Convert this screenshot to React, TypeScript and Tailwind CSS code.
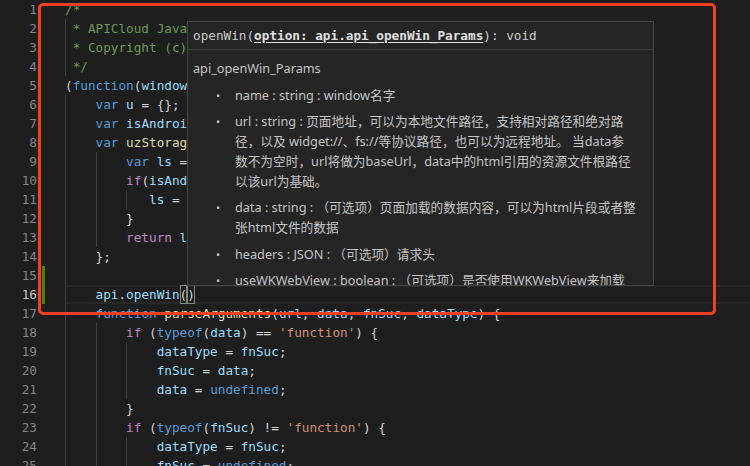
import React from 'react';

type Tok = [string, keyof typeof COLOR];

const COLOR = {
  k: 'text-[#569cd6]',
  c: 'text-[#c586c0]',
  i: 'text-[#9cdcfe]',
  f: 'text-[#dcdcaa]',
  s: 'text-[#ce9178]',
  p: 'text-[#d4d4d4]',
  m: 'text-[#6a9955]',
  r: 'text-[#d16969]',
};

const INDENT: Record<number, string> = {
  1: 'w-[1ch]',
  3: 'w-[3ch]',
  4: 'w-[4ch]',
};

interface Line {
  indent: number[];
  toks: Tok[];
}

const LINES: Line[] = [
  { indent: [], toks: [['/*', 'm']] },
  { indent: [1], toks: [['* APICloud JavaScript Library', 'm']] },
  { indent: [1], toks: [['* Copyright (c) 2014 apicloud.com', 'm']] },
  { indent: [1], toks: [['*/', 'm']] },
  { indent: [], toks: [['(', 'p'], ['function', 'k'], ['(', 'p'], ['window', 'i'], ['){', 'p']] },
  { indent: [4], toks: [['var', 'k'], [' ', 'p'], ['u', 'i'], [' = {};', 'p']] },
  { indent: [4], toks: [['var', 'k'], [' ', 'p'], ['isAndroid', 'i'], [' = (', 'p'], ['/android/gi', 'r'], [').', 'p'], ['test', 'f'], ['(', 'p'], ['navigator', 'i'], ['.', 'p'], ['appVersion', 'i'], [');', 'p']] },
  { indent: [4], toks: [['var', 'k'], [' ', 'p'], ['uzStorage', 'f'], [' = ', 'p'], ['function', 'k'], ['(){', 'p']] },
  { indent: [4, 4], toks: [['var', 'k'], [' ', 'p'], ['ls', 'i'], [' = ', 'p'], ['window', 'i'], ['.', 'p'], ['localStorage', 'i'], [';', 'p']] },
  { indent: [4, 4], toks: [['if', 'c'], ['(', 'p'], ['isAndroid', 'i'], ['){', 'p']] },
  { indent: [4, 4, 3], toks: [['ls', 'i'], [' = ', 'p'], ['os', 'i'], ['.', 'p'], ['localStorage', 'f'], ['();', 'p']] },
  { indent: [4, 4], toks: [['}', 'p']] },
  { indent: [4, 4], toks: [['return', 'c'], [' ', 'p'], ['ls', 'i'], [';', 'p']] },
  { indent: [4], toks: [['};', 'p']] },
  { indent: [4], toks: [] },
  { indent: [4], toks: [['api', 'i'], ['.', 'p'], ['openWin', 'i']] },
  { indent: [4], toks: [['function', 'k'], [' ', 'p'], ['parseArguments', 'f'], ['(', 'p'], ['url', 'i'], [', ', 'p'], ['data', 'i'], [', ', 'p'], ['fnSuc', 'i'], [', ', 'p'], ['dataType', 'i'], [') {', 'p']] },
  { indent: [4, 4], toks: [['if', 'c'], [' (', 'p'], ['typeof', 'k'], ['(', 'p'], ['data', 'i'], [') == ', 'p'], ["'function'", 's'], [') {', 'p']] },
  { indent: [4, 4, 4], toks: [['dataType', 'i'], [' = ', 'p'], ['fnSuc', 'i'], [';', 'p']] },
  { indent: [4, 4, 4], toks: [['fnSuc', 'i'], [' = ', 'p'], ['data', 'i'], [';', 'p']] },
  { indent: [4, 4, 4], toks: [['data', 'i'], [' = ', 'p'], ['undefined', 'k'], [';', 'p']] },
  { indent: [4, 4], toks: [['}', 'p']] },
  { indent: [4, 4], toks: [['if', 'c'], [' (', 'p'], ['typeof', 'k'], ['(', 'p'], ['fnSuc', 'i'], [') != ', 'p'], ["'function'", 's'], [') {', 'p']] },
  { indent: [4, 4, 4], toks: [['dataType', 'i'], [' = ', 'p'], ['fnSuc', 'i'], [';', 'p']] },
  { indent: [4, 4, 4], toks: [['fnSuc', 'i'], [' = ', 'p'], ['undefined', 'k'], [';', 'p']] },
];

const ACTIVE = 16;
const MODIFIED = [15, 16];

function CodeLine({ line, n }: { line: Line; n: number }) {
  const active = n === ACTIVE;
  return (
    <div className="flex h-[19px] leading-[19px]">
      <div className="flex w-[65px] shrink-0">
        <span className={`w-[37px] text-right ${active ? 'text-[#c6c6c6]' : 'text-[#858585]'}`}>{n}</span>
        <span className={`ml-[5px] w-[3px] ${MODIFIED.includes(n) ? 'bg-[#587c0c]' : ''}`} />
      </div>
      <div
        className={`flex flex-1 whitespace-pre ${
          active ? 'shadow-[inset_0_2px_0_#282828,inset_0_-2px_0_#282828]' : ''
        }`}
      >
        {line.indent.map((w, i) => (
          <span key={i} className={`${INDENT[w]} h-full shrink-0 border-l border-[#404040]`} />
        ))}
        {line.toks.map(([t, c], i) => (
          <span key={i} className={COLOR[c]}>{t}</span>
        ))}
        {active && (
          <>
            <span className="text-[#d4d4d4] shadow-[inset_0_0_0_1px_#7f8a7f]">(</span>
            <span className="text-[#d4d4d4] shadow-[inset_0_0_0_1px_#7f8a7f]">)</span>
          </>
        )}
      </div>
    </div>
  );
}

const ITEMS: string[][] = [
  ['name : string : window名字'],
  [
    'url : string : 页面地址，可以为本地文件路径，支持相对路径和绝对路',
    '径，以及 widget://、fs://等协议路径，也可以为远程地址。 当data参',
    '数不为空时，url将做为baseUrl，data中的html引用的资源文件根路径',
    '以该url为基础。',
  ],
  ['data : string : （可选项）页面加载的数据内容，可以为html片段或者整', '张html文件的数据'],
  ['headers : JSON : （可选项）请求头'],
  ['useWKWebView : boolean : （可选项）是否使用WKWebView来加载'],
];

function HoverWidget() {
  return (
    <div className="absolute left-[187px] top-[21px] h-[265px] w-[467px] overflow-hidden border border-[#454545] bg-[#252526]">
      <div className="h-[28px] border-b border-[#3a3a3a] px-[5px] leading-[27px] text-[#cccccc] whitespace-pre">
        openWin(<span className="font-bold text-[#e0e0e0] underline underline-offset-2">option: api.api_openWin_Params</span>): void
      </div>
      <div className="pl-[5px] pt-[9px] font-['Noto_Sans','Noto_Sans_CJK_SC',sans-serif] text-[12.7px] leading-[19.7px] text-[#c4c4c4]">
        <div>api_openWin_Params</div>
        {ITEMS.map((rows, i) => (
          <div key={i} className="mt-[7px] flex">
            <span className="w-[42px] shrink-0 pl-[23px] text-[11px]">•</span>
            <div>
              {rows.map((r, j) => (
                <div key={j} className="whitespace-nowrap">{r}</div>
              ))}
            </div>
          </div>
        ))}
      </div>
    </div>
  );
}

export default function App() {
  return (
    <div className="relative h-[466px] w-[750px] overflow-hidden bg-[#1e1e1e] font-['DejaVu_Sans_Mono',monospace] text-[12.7px]">
      <div className="flex flex-col">
        {LINES.map((l, i) => (
          <CodeLine key={i} line={l} n={i + 1} />
        ))}
      </div>
      <HoverWidget />
      <div className="pointer-events-none absolute left-[38px] top-[3px] h-[312px] w-[678px] rounded-[5px] border-[3.5px] border-[#f1401f]" />
    </div>
  );
}
